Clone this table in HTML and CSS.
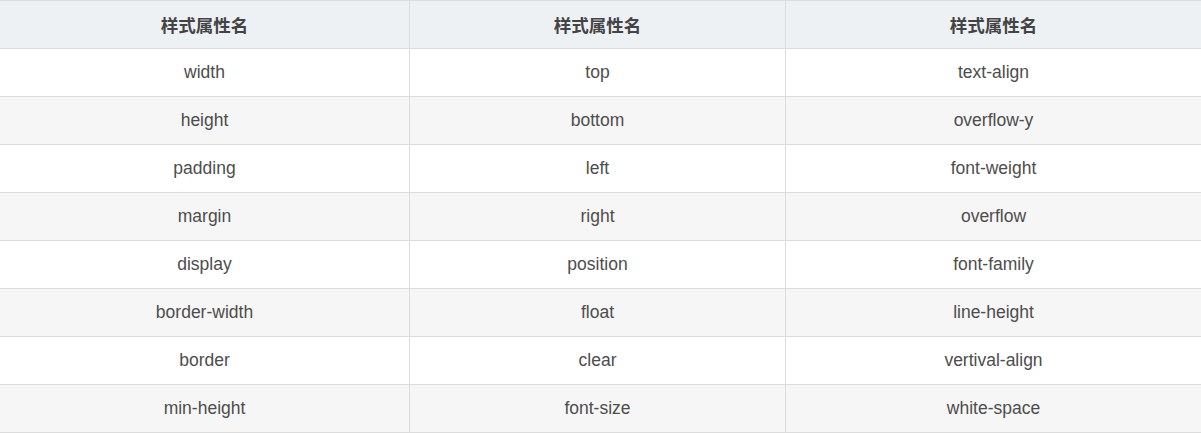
FILE: index.html
```html
<!DOCTYPE html>
<html lang="zh">
<head>
<meta charset="utf-8">
<link rel="stylesheet" href="styles.css">
</head>
<body>
<table class="props">
  <colgroup>
    <col class="c1"><col class="c2"><col class="c3">
  </colgroup>
  <thead>
    <tr><th>样式属性名</th><th>样式属性名</th><th>样式属性名</th></tr>
  </thead>
  <tbody>
    <tr><td>width</td><td>top</td><td>text-align</td></tr>
    <tr><td>height</td><td>bottom</td><td>overflow-y</td></tr>
    <tr><td>padding</td><td>left</td><td>font-weight</td></tr>
    <tr><td>margin</td><td>right</td><td>overflow</td></tr>
    <tr><td>display</td><td>position</td><td>font-family</td></tr>
    <tr><td>border-width</td><td>float</td><td>line-height</td></tr>
    <tr><td>border</td><td>clear</td><td>vertival-align</td></tr>
    <tr><td>min-height</td><td>font-size</td><td>white-space</td></tr>
  </tbody>
</table>
</body>
</html>
```
FILE: styles.css
```css
html, body {
  margin: 0;
  padding: 0;
  background: #ffffff;
}
.props {
  border-collapse: collapse;
  table-layout: fixed;
  width: 1202px;
  margin-left: -1px;
  font-family: "Liberation Sans", Arial, "Noto Sans CJK SC", sans-serif;
  font-size: 17.5px;
  color: #4d4d4d;
}
.c1 { width: 410px; }
.c2 { width: 376px; }
.c3 { width: 416px; }
.props th,
.props td {
  border: 1px solid #dcdcdc;
  height: 48px;
  padding: 0 8px;
  text-align: center;
  vertical-align: middle;
  box-sizing: border-box;
}
.props th {
  background: #eef1f4;
  font-family: "Noto Sans CJK SC", "Liberation Sans", sans-serif;
  font-weight: bold;
  color: #444;
}
.props tbody tr:nth-child(even) td {
  background: #f6f6f6;
}
```
